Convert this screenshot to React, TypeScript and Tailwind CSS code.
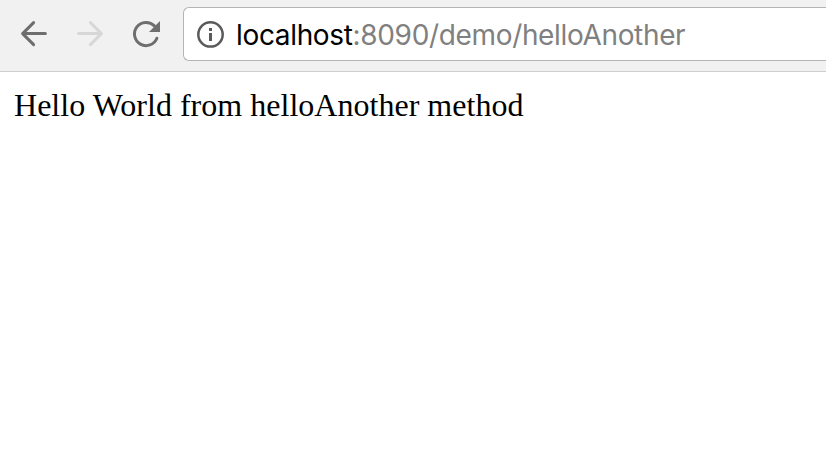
function BackIcon() {
  return (
    <svg className="h-[30px] w-[30px]" viewBox="0 0 30 30" fill="none" stroke="#6e6e6e" strokeWidth="3" strokeLinecap="round" strokeLinejoin="round">
      <path d="M26.4 14.6H4M14.6 3.6l-11 11 11 11" />
    </svg>
  );
}

function ForwardIcon() {
  return (
    <svg className="h-[30px] w-[30px]" viewBox="0 0 30 30" fill="none" stroke="#d7d7d7" strokeWidth="3" strokeLinecap="round" strokeLinejoin="round">
      <path d="M3.6 14.6H26M15.4 3.6l11 11-11 11" />
    </svg>
  );
}

function ReloadIcon() {
  return (
    <svg className="h-[30px] w-[30px]" viewBox="0 0 30 30" fill="none">
      <path d="M25.9 19.2A11.6 11.6 0 1 1 23.4 6.9" stroke="#6e6e6e" strokeWidth="3" strokeLinecap="round" />
      <path d="M29 2v11H18z" fill="#6e6e6e" />
    </svg>
  );
}

function InfoIcon() {
  return (
    <svg className="h-7 w-7 shrink-0" viewBox="0 0 28 28" fill="none">
      <circle cx="13.5" cy="14.4" r="12.2" stroke="#5a5a5a" strokeWidth="2.5" />
      <path d="M12 8h3v3h-3zM12 13h3v8h-3z" fill="#5a5a5a" />
    </svg>
  );
}

export default function App() {
  return (
    <div className="h-[464px] w-full overflow-hidden bg-white">
      <header className="flex h-[72px] items-start border-b border-[#cfcfcf] bg-[#f1f1f1] pt-[7px] pl-[19px]">
        <nav className="flex gap-[26px] pt-3">
          <button aria-label="Back"><BackIcon /></button>
          <button aria-label="Forward"><ForwardIcon /></button>
          <button aria-label="Reload"><ReloadIcon /></button>
        </nav>
        <div className="ml-[22px] flex h-[54px] grow items-center rounded-l-[6px] border border-r-0 border-[#b4b4b4] bg-white pl-[13px]">
          <InfoIcon />
          <div className="ml-[11px] pt-px font-[Inter,sans-serif] text-[28px] leading-8 tracking-[-0.34px] whitespace-nowrap text-[#808080]">
            <span className="text-black">localhost</span>:8090/demo/helloAnother
          </div>
        </div>
      </header>
      <main className="pt-[15px] pl-[14px] font-['Liberation_Serif',serif] text-[32px] leading-9 tracking-[0.02px] whitespace-nowrap text-black">
        Hello World from helloAnother method
      </main>
    </div>
  );
}
